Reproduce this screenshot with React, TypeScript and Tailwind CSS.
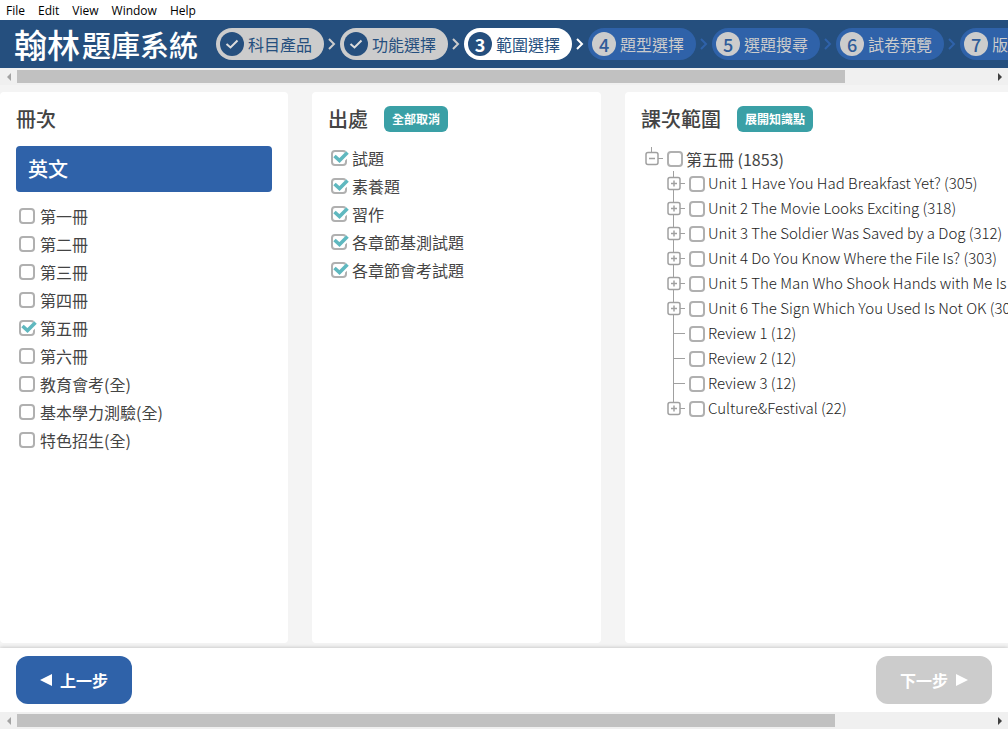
import { useState } from "react";
import clsx from "clsx";

interface Node {
  label: string;
  count: number;
  expandable: boolean;
}

const menus = ["File", "Edit", "View", "Window", "Help"];

const steps = ["科目產品", "功能選擇", "範圍選擇", "題型選擇", "選題搜尋", "試卷預覽", "版面設定"];
const currentStep = 2;

const volumes = [
  "第一冊",
  "第二冊",
  "第三冊",
  "第四冊",
  "第五冊",
  "第六冊",
  "教育會考(全)",
  "基本學力測驗(全)",
  "特色招生(全)",
];

const sources = ["試題", "素養題", "習作", "各章節基測試題", "各章節會考試題"];

const nodes: Node[] = [
  { label: "Unit 1 Have You Had Breakfast Yet?", count: 305, expandable: true },
  { label: "Unit 2 The Movie Looks Exciting", count: 318, expandable: true },
  { label: "Unit 3 The Soldier Was Saved by a Dog", count: 312, expandable: true },
  { label: "Unit 4 Do You Know Where the File Is?", count: 303, expandable: true },
  { label: "Unit 5 The Man Who Shook Hands with Me Is", count: 301, expandable: true },
  { label: "Unit 6 The Sign Which You Used Is Not OK", count: 302, expandable: true },
  { label: "Review 1", count: 12, expandable: false },
  { label: "Review 2", count: 12, expandable: false },
  { label: "Review 3", count: 12, expandable: false },
  { label: "Culture&Festival", count: 22, expandable: true },
];

function CheckBox({ checked, onChange }: { checked: boolean; onChange: () => void }) {
  return (
    <span className="relative block h-4 w-4 shrink-0">
      <input
        type="checkbox"
        checked={checked}
        onChange={onChange}
        className="block h-4 w-4 appearance-none rounded border-2 border-[#b0b0b0] bg-white"
      />
      {checked && (
        <svg viewBox="0 0 20 16" className="pointer-events-none absolute top-0 left-0 h-4 w-5">
          <path d="M10 10.5 L18 2.5" fill="none" stroke="#fff" strokeWidth="6" />
          <path d="M3.5 6 L8.5 10.5 L16.5 2.5" fill="none" stroke="#5fb8bf" strokeWidth="3.6" />
        </svg>
      )}
    </span>
  );
}

function CheckList({ items, initial }: { items: string[]; initial: string[] }) {
  const [picked, setPicked] = useState<string[]>(initial);

  const toggle = (item: string) =>
    setPicked(picked.includes(item) ? picked.filter((p) => p !== item) : [...picked, item]);

  return (
    <ul className="pl-[3px]">
      {items.map((item) => (
        <li key={item}>
          <label className="flex h-7 items-center gap-[5px] whitespace-nowrap">
            <CheckBox checked={picked.includes(item)} onChange={() => toggle(item)} />
            {item}
          </label>
        </li>
      ))}
    </ul>
  );
}

// tree lines, with a +/- box when the row can be opened
function Branch({ box, open, up, down }: { box: boolean; open?: boolean; up: number; down: boolean }) {
  return (
    <svg viewBox="0 0 22 25" className="block h-[25px] w-[22px]" fill="none" stroke="#a0a0a0">
      <path d={`M6.5 ${up} V${down ? 25 : 12}`} />
      <path d="M6.5 12.5 H18" />
      {box && (
        <>
          <rect x="1" y="6.5" width="12" height="12" rx="2" fill="#fff" strokeWidth="1.5" />
          <path d="M4 12.5 H10" strokeWidth="1.5" />
          {!open && <path d="M7 9.5 V15.5" strokeWidth="1.5" />}
        </>
      )}
    </svg>
  );
}

function LessonTree() {
  const [picked, setPicked] = useState<string[]>([]);

  const toggle = (item: string) =>
    setPicked(picked.includes(item) ? picked.filter((p) => p !== item) : [...picked, item]);

  return (
    <div className="pl-1 whitespace-nowrap">
      <div className="flex">
        <button type="button" aria-label="收合" className="shrink-0">
          <Branch box open up={1} down={false} />
        </button>
        <label className="flex h-[25px] items-center gap-[3px]">
          <CheckBox checked={picked.includes("root")} onChange={() => toggle("root")} />
          第五冊 (1853)
        </label>
      </div>
      <ul className="pl-[22px] text-[15px] font-light text-[#222222]">
        {nodes.map((node, i) => (
          <li key={node.label} className="flex">
            {node.expandable ? (
              <button type="button" aria-label="展開" className="shrink-0">
                <Branch box up={0} down={i < nodes.length - 1} />
              </button>
            ) : (
              <Branch box={false} up={0} down />
            )}
            <label className="flex h-[25px] items-center gap-[3px]">
              <CheckBox checked={picked.includes(node.label)} onChange={() => toggle(node.label)} />
              {node.label} ({node.count})
            </label>
          </li>
        ))}
      </ul>
    </div>
  );
}

function ScrollBar({ thumb }: { thumb: string }) {
  return (
    <div className="flex h-[17px] shrink-0 items-center bg-[#f0f0f0]">
      <button type="button" aria-label="向左捲動" className="flex w-[17px] justify-center">
        <svg viewBox="0 0 4 8" className="h-2 w-1" fill="#a3a3a3">
          <path d="M4 0 V8 L0 4 Z" />
        </svg>
      </button>
      <div className="flex-1">
        <div className={clsx("h-[13px] bg-[#c1c1c1]", thumb)} />
      </div>
      <button type="button" aria-label="向右捲動" className="flex w-[17px] justify-center">
        <svg viewBox="0 0 4 8" className="h-2 w-1" fill="#404040">
          <path d="M0 0 V8 L4 4 Z" />
        </svg>
      </button>
    </div>
  );
}

function Step({ label, index }: { label: string; index: number }) {
  const done = index < currentStep;
  const active = index === currentStep;
  return (
    <li className="flex shrink-0 items-center">
      <a
        href="#"
        className={clsx(
          "flex h-8 items-center gap-1 rounded-full pr-3 pl-1 whitespace-nowrap",
          done && "bg-[#cccccc] text-[#254f7e]",
          active && "bg-white text-[#254f7e]",
          !done && !active && "bg-[#2f62a9] text-[#cccccc]"
        )}
      >
        <span
          className={clsx(
            "flex h-6 w-6 items-center justify-center rounded-full text-lg leading-6",
            done && "bg-[#254f7e]",
            active && "bg-[#254f7e] font-bold text-white",
            !done && !active && "bg-[#cccccc] font-medium text-[#2f5c99]"
          )}
        >
          {done ? (
            <svg viewBox="0 0 24 24" className="h-6 w-6" fill="none" stroke="#ddd" strokeWidth="2">
              <path d="M6.5 12 L10.5 15.5 L17.5 8.5" />
            </svg>
          ) : (
            index + 1
          )}
        </span>
        {label}
      </a>
      {index < steps.length - 1 && (
        <span className="flex w-4 justify-center">
          <svg
            viewBox="0 0 8 12"
            className={clsx(
              "h-3 w-2",
              done && "text-[#cccccc]",
              active && "text-white",
              !done && !active && "text-[#2f62a9]"
            )}
            fill="none"
            stroke="currentColor"
            strokeWidth="2"
          >
            <path d="M1 1 L6 6 L1 11" />
          </svg>
        </span>
      )}
    </li>
  );
}

export default function App() {
  return (
    <div className="flex h-screen flex-col overflow-hidden bg-[#f4f4f4] font-['Noto_Sans_CJK_TC',sans-serif] text-base text-[#444444]">
      {/* window menu */}
      <nav className="flex h-5 shrink-0 items-center gap-[13px] bg-white pt-0.5 pl-[6px] font-['Open_Sans',sans-serif] text-xs text-black">
        {menus.map((menu) => (
          <button type="button" key={menu}>
            {menu}
          </button>
        ))}
      </nav>

      {/* logo + steps */}
      <header className="flex h-12 shrink-0 items-center overflow-hidden bg-[#254f7e] pl-[14px]">
        <h1 className="flex w-[202px] shrink-0 items-center gap-0.5 whitespace-nowrap text-white">
          <span className="text-[33px] leading-8 font-medium">翰林</span>
          <span className="text-[29px] leading-8 font-medium">題庫系統</span>
        </h1>
        <ol className="flex">
          {steps.map((label, i) => (
            <Step key={label} label={label} index={i} />
          ))}
        </ol>
      </header>
      <ScrollBar thumb="w-[85%]" />

      {/* three columns */}
      <main className="grid min-h-0 flex-1 grid-cols-[288fr_289fr_383fr] gap-6 pt-[7px] pb-[5px]">
        <section className="min-w-0 overflow-hidden rounded bg-white px-4 pt-[14px]">
          <h2 className="text-xl leading-[26px] font-medium">冊次</h2>
          <button
            type="button"
            className="mt-[14px] mb-[10px] flex h-[46px] w-full items-center rounded bg-[#2f62a9] px-3 text-xl font-medium text-white"
          >
            英文
          </button>
          <CheckList items={volumes} initial={["第五冊"]} />
        </section>

        <section className="min-w-0 overflow-hidden rounded bg-white px-4 pt-[14px]">
          <div className="mb-3 flex items-center gap-4">
            <h2 className="text-xl leading-[26px] font-medium">出處</h2>
            <button type="button" className="h-[26px] rounded-md bg-[#3aa0a6] px-2 text-xs font-bold text-white">
              全部取消
            </button>
          </div>
          <CheckList items={sources} initial={sources} />
        </section>

        <section className="min-w-0 overflow-hidden rounded-l bg-white pt-[14px] pl-4">
          <div className="mb-[14px] flex items-center gap-4">
            <h2 className="text-xl leading-[26px] font-medium">課次範圍</h2>
            <button type="button" className="h-[26px] rounded-md bg-[#3aa0a6] px-2 text-xs font-bold text-white">
              展開知識點
            </button>
          </div>
          <LessonTree />
        </section>
      </main>

      {/* prev / next */}
      <footer className="flex h-16 shrink-0 items-center justify-between bg-white px-4 shadow-[0_0_4px_rgba(0,0,0,0.25)]">
        <button
          type="button"
          className="flex h-12 items-center gap-2 rounded-xl bg-[#2f62a9] px-6 font-bold text-white"
        >
          <svg viewBox="0 0 12 12" className="h-3 w-3" fill="currentColor">
            <path d="M12 0 V12 L0 6 Z" />
          </svg>
          上一步
        </button>
        <button
          type="button"
          disabled
          className="flex h-12 items-center gap-2 rounded-xl bg-[#cccccc] px-6 font-bold text-white"
        >
          下一步
          <svg viewBox="0 0 12 12" className="h-3 w-3" fill="currentColor">
            <path d="M0 0 V12 L12 6 Z" />
          </svg>
        </button>
      </footer>
      <ScrollBar thumb="w-[84%]" />
    </div>
  );
}
